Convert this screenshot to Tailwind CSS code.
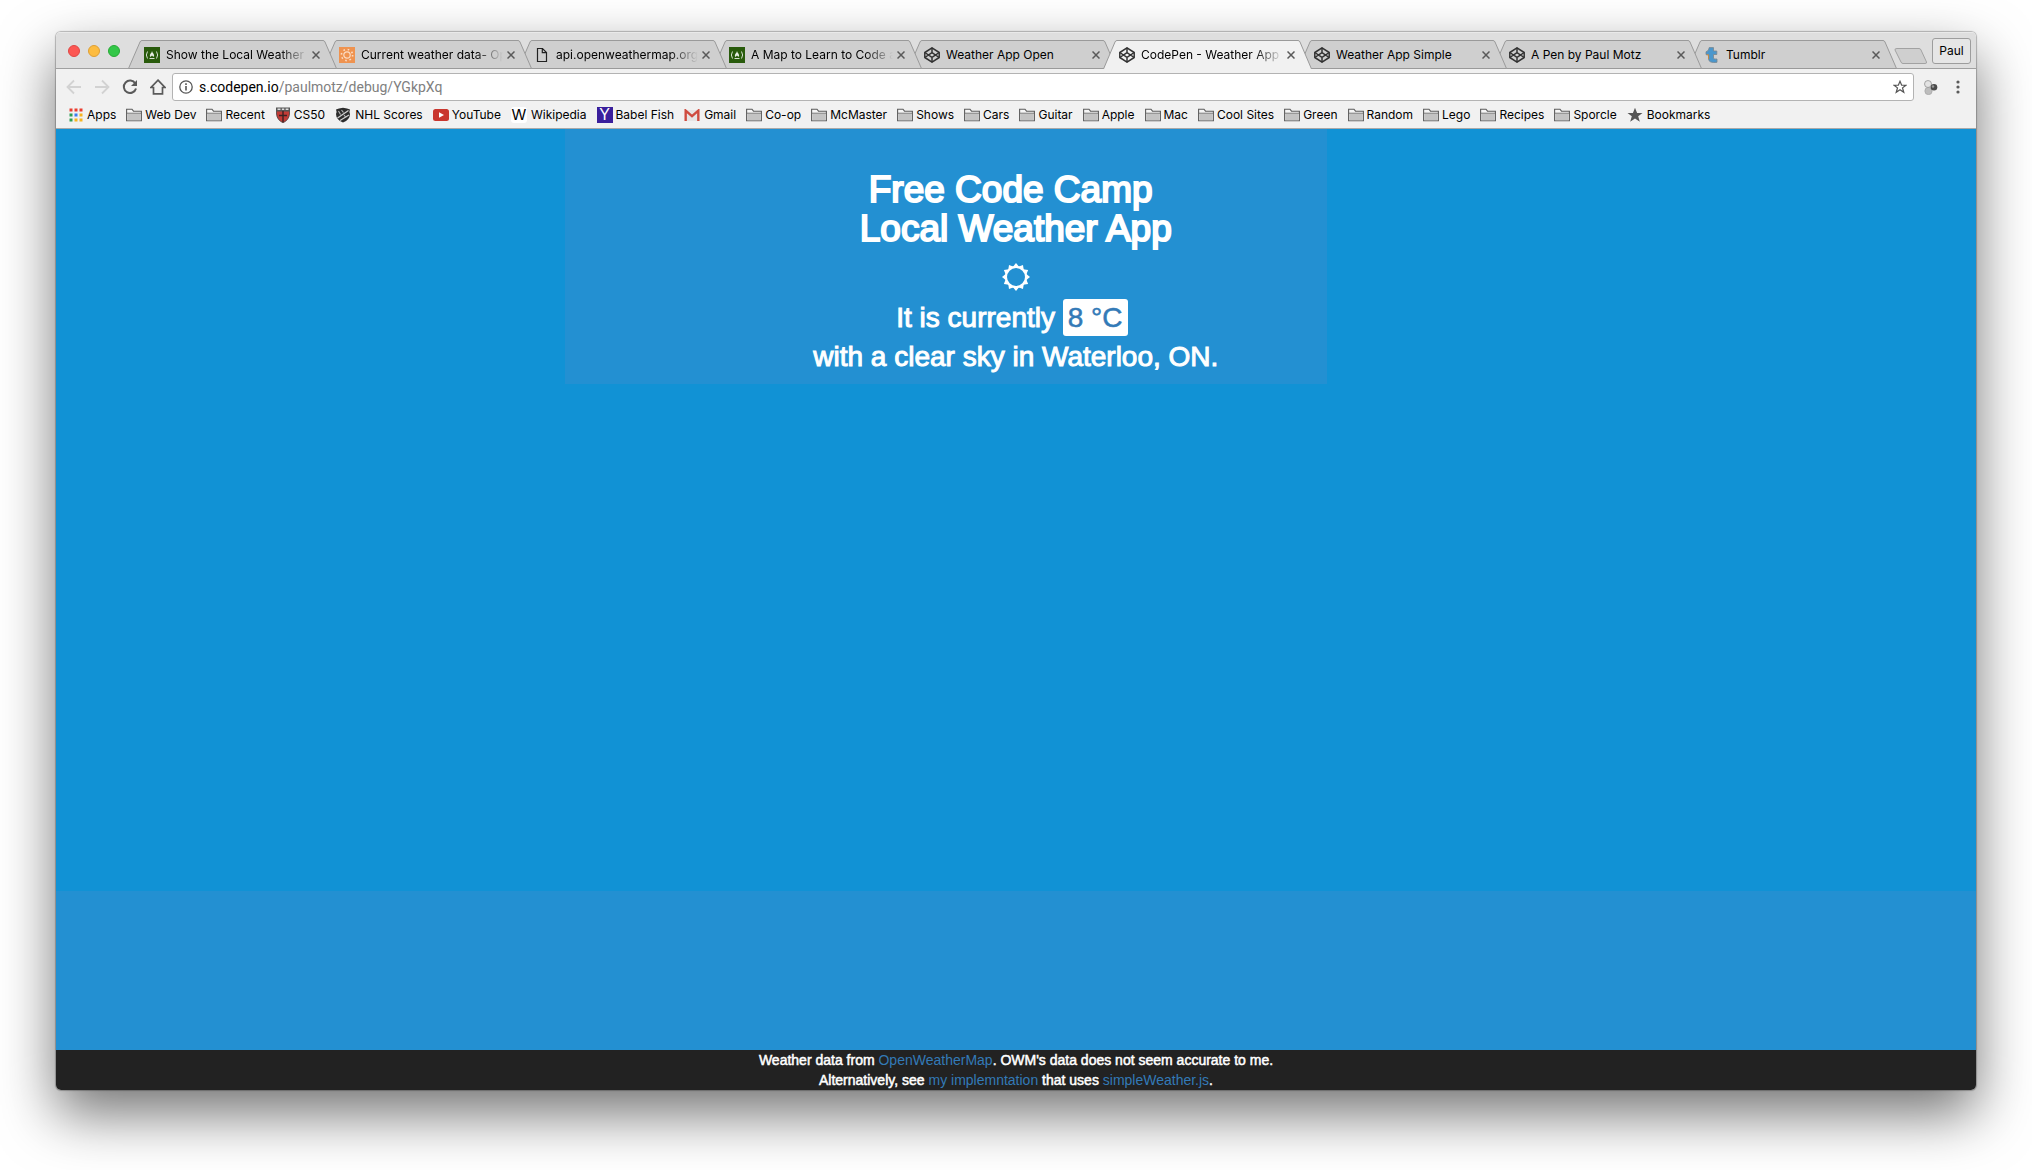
<!DOCTYPE html>
<html lang="en">
<head>
<meta charset="utf-8">
<title>CodePen - Weather App</title>
<script src="https://cdn.jsdelivr.net/npm/@tailwindcss/browser@4"></script>
</head>
<body class="min-h-screen bg-white flex flex-col px-14 pt-8 pb-20 font-['Inter',sans-serif] text-black">

<svg class="hidden" aria-hidden="true">
  <symbol id="codepen" viewBox="0 0 16 16"><g fill="none" stroke="#333" stroke-width="1.5" stroke-linejoin="round"><path d="M8 .8 15.200 5.500V10.500L8 15.200 .8 10.500V5.500Z"/><path d="M8 .8V5.600M8 10.400V15.200M.8 5.500 8 10.400 15.200 5.500M.8 10.500 8 5.600 15.200 10.500"/></g></symbol>
  <symbol id="fcc" viewBox="0 0 16 16"><path d="M0 0H16V16H0Z" fill="#295b0c"/><g fill="none" stroke="#d5dfd0" stroke-width="1"><path d="M3.500 4.500Q1.200 8 3.500 11.500M12.500 4.500Q14.800 8 12.500 11.500M5.500 11.500H10.500"/></g><path d="M8 4Q8.300 5.500 9.700 7 11 9 9 10.300 9.300 9 8 8.500 6.700 9 7 10.300 5 9 6.500 6.800 7.800 5.500 8 4Z" fill="#e6ece3"/></symbol>
  <symbol id="owm" viewBox="0 0 16 16"><path d="M0 0H16V16H0Z" fill="#ef9350"/><g fill="none" stroke="#fbdcc4"><circle cx="8" cy="8" r="3.200" stroke-width="1.200"/><circle cx="8" cy="8" r="5.600" stroke-width="1.600" stroke-dasharray="1.600 2.800"/></g></symbol>
  <symbol id="file" viewBox="0 0 16 16"><path d="M3.500 1.500H8.500L12.500 5.500V14.500H3.500ZM8.300 1.500V5.700H12.500" fill="none" stroke="#222" stroke-width="1.200"/></symbol>
  <symbol id="tumblr" viewBox="0 0 16 16"><path d="M5.200 .6H9.500V4H12.800V7.500H9.500V11Q9.500 12.600 13 12V15.300Q4.500 16.500 4.500 11.500V7.500H2V4.800Q5 4 5.200 .6Z" fill="#4b97cc" stroke="#77858f" stroke-width=".8"/><path d="M2.500 7.900H4.600V12" fill="none" stroke="#c98b42" stroke-width="1"/></symbol>
  <symbol id="folder" viewBox="0 0 16 14"><path d="M.6 12.800V1.200H6L7.500 3.200H15.400V12.800Z" fill="#f6f6f6" stroke="#5c5c5c" stroke-width="1.100"/><path d="M1.200 5.500H14.800V12.200H1.200Z" fill="#c3c3c3"/><path d="M1 5.200H15" stroke="#777"/></symbol>
  <symbol id="apps" viewBox="0 0 14 14"><path d="M.5 .5h3v3h-3zM5.500 .5h3v3h-3zM10.500 .5h3v3h-3z" fill="#ea3d2f"/><path d="M.5 5.500h3v3h-3z" fill="#2f9e55"/><path d="M5.500 5.500h3v3h-3z" fill="#3d7ef0"/><path d="M10.500 5.500h3v3h-3zM5.500 10.500h3v3h-3zM10.500 10.500h3v3h-3z" fill="#f7b51f"/><path d="M.5 10.500h3v3h-3z" fill="#2f9e55"/></symbol>
  <symbol id="shield" viewBox="0 0 16 16"><path d="M1.500 3.500H14.500V7Q14 13 8 15.800 2 13 1.500 7Z" fill="#c23b36" stroke="#4b4040" stroke-width=".8"/><path d="M1 .5H15V4.500H1Z" fill="#555"/><path d="M2.500 2.200H5.500M6.800 2.200H9.300M10.600 2.200H13.500" stroke="#ddd" stroke-width="1.600"/><path d="M8 4V15M4 8.500H12" stroke="#3a2222" stroke-width="1.400"/></symbol>
  <symbol id="nhl" viewBox="0 0 16 16"><path d="M1 2.500 4 1.500 8 .8 12 1.500 15 2.500Q14 4.500 15 7 15 12.500 8 15.600 1 12.500 1 7 2 4.500 1 2.500Z" fill="#2c2c2c"/><path d="M2.500 11 13.500 3.500M5 13.500 14 8" stroke="#cfcfcf" stroke-width="1.300"/><path d="M3.500 4 5.500 7.500M6.500 3 8.500 5.500M9 8 11 10.500" stroke="#bbb" stroke-width="1.100"/></symbol>
  <symbol id="youtube" viewBox="0 0 16 12"><rect width="16" height="12" rx="2.500" fill="#c9372f"/><path d="M6 3.300 11 6 6 8.700Z" fill="#fff"/></symbol>
  <symbol id="gmail" viewBox="0 0 14 11"><path d="M1 1H13V11H1Z" fill="#e6e4e4"/><path d="M1.200 11V1.500L7 6.500 12.800 1.500V11" fill="none" stroke="#cf4b3f" stroke-width="2.200"/></symbol>
  <symbol id="star" viewBox="0 0 16 16"><path d="M8 .8 10.100 6H15.500L11.200 9.300 12.800 14.800 8 11.600 3.200 14.800 4.800 9.300 .5 6H5.900Z" fill="#555"/></symbol>
  <symbol id="close" viewBox="0 0 8 8"><path d="M.5 .5 7.500 7.500M7.500 .5 .5 7.500" stroke="#5a5a5a" stroke-width="1.500"/></symbol>
  <symbol id="tab" viewBox="0 0 209 29" preserveAspectRatio="none"><path d="M.5 28.500 12 2Q12.600 .5 14 .5H195Q196.400 .5 197 2L208.500 28.500Z" fill="#cfcfcf" stroke="#9a9a9a"/></symbol>
  <symbol id="tab-active" viewBox="0 0 209 29" preserveAspectRatio="none"><path d="M.5 29 12 2Q12.600 .5 14 .5H195Q196.400 .5 197 2L208.500 29" fill="#f1f1f1" stroke="#9a9a9a"/></symbol>
</svg>

<main class="grow flex flex-col rounded-[5px] overflow-hidden shadow-[0_0_1px_1px_rgba(0,0,0,0.25),0_24px_56px_rgba(0,0,0,0.55)]">
  <header class="bg-[#f1f1f1] border-b border-[#a9a9a9]">

    <div class="flex h-9 bg-[#dedede] border-t border-[#e9e9e9] relative">
      <div class="flex gap-2 pl-3 pt-3 w-[72px] shrink-0">
        <button aria-label="Close window" class="size-3 rounded-full bg-[#fc5753] border border-[#df4744]"></button>
        <button aria-label="Minimize window" class="size-3 rounded-full bg-[#fdbc40] border border-[#de9f34]"></button>
        <button aria-label="Zoom window" class="size-3 rounded-full bg-[#33c748] border border-[#27aa35]"></button>
      </div>
      <nav aria-label="Tabs" id="tabs" class="flex grow pt-[7px] min-w-0 isolate"></nav>
      <div class="flex shrink-0 pr-[5px] gap-1 pl-2.5">
        <button aria-label="New tab" class="pt-[15px] self-start"><svg class="w-[34px] h-4" viewBox="0 0 34 16"><path d="M3 .5H25Q26.500 .5 27 2L32.500 14Q33 15.500 31 15.500H9Q7.500 15.500 7 14L1 2Q.5 .5 3 .5Z" fill="#cfcfcf" stroke="#a2a2a2"/></svg></button>
        <button class="mt-[5px] w-[39px] h-[26px] rounded-[3px] border border-[#9d9d9d] bg-[#e6e6e6] text-xs">Paul</button>
      </div>
    </div>

    <div class="flex items-center h-[37px] px-2.5 border-t border-[#a0a0a0]">
      <div class="flex items-center gap-3 w-[106px] shrink-0">
        <button aria-label="Back"><svg class="size-4" viewBox="0 0 16 16"><path d="M15 8H2M8 1.500 1.500 8 8 14.500" fill="none" stroke="#d2d2d2" stroke-width="1.800"/></svg></button>
        <button aria-label="Forward"><svg class="size-4" viewBox="0 0 16 16"><path d="M1 8H14M8 1.500 14.500 8 8 14.500" fill="none" stroke="#d2d2d2" stroke-width="1.800"/></svg></button>
        <button aria-label="Reload"><svg class="size-4" viewBox="0 0 16 16"><path d="M13.300 4.500A6.200 6.200 0 1 0 14 9.500" fill="none" stroke="#5a5a5a" stroke-width="2"/><path d="M15 1V7H9Z" fill="#5a5a5a"/></svg></button>
        <button aria-label="Home"><svg class="size-4" viewBox="0 0 16 16"><path d="M8 1.200 15 8.500H12.500V14.800H3.500V8.500H1Z" fill="none" stroke="#5a5a5a" stroke-width="1.700"/></svg></button>
      </div>
      <div class="flex items-center grow h-7 px-1.5 gap-1.5 bg-white border border-[#b3b3b3] rounded-[3px]">
        <svg class="size-[14px]" viewBox="0 0 14 14"><circle cx="7" cy="7" r="6.200" fill="none" stroke="#555" stroke-width="1.300"/><path d="M7 6V10.500M7 3.300V4.900" stroke="#555" stroke-width="1.600"/></svg>
        <a href="#" class="grow font-['Roboto',sans-serif] text-sm text-[#808080]"><span class="text-black">s.codepen.io</span>/paulmotz/debug/YGkpXq</a>
        <button aria-label="Bookmark this page"><svg class="size-[14px]" viewBox="0 0 16 16"><path d="M8 1.500 9.900 6H14.700L10.900 9 12.300 14 8 11.100 3.700 14 5.100 9 1.300 6H6.100Z" fill="none" stroke="#555" stroke-width="1.400"/></svg></button>
      </div>
      <button aria-label="Extension" class="ml-2.5"><svg class="w-[14px] h-[15px]" viewBox="0 0 14 15"><circle cx="4.500" cy="11" r="3.700" fill="#bdbdbd" stroke="#999" stroke-width=".5"/><circle cx="4" cy="4" r="3.500" fill="#e3e3e3" stroke="#888" stroke-width=".7"/><circle cx="10" cy="7.300" r="3.300" fill="#4a4a4a"/><circle cx="9" cy="6.500" r="1.200" fill="#999"/></svg></button>
      <button aria-label="Menu" class="ml-4 mr-1"><svg class="w-2 h-[14px]" viewBox="0 0 8 14"><g fill="#5a5a5a"><circle cx="4" cy="2" r="1.600"/><circle cx="4" cy="7" r="1.600"/><circle cx="4" cy="12" r="1.600"/></g></svg></button>
    </div>

    <nav aria-label="Bookmarks" id="bookmarks" class="flex items-center gap-2.5 h-[23px] pb-[3px] pl-3 text-xs whitespace-nowrap"></nav>
  </header>

  <div class="grow flex flex-col justify-between bg-[#1192d5] font-['Liberation_Sans',sans-serif] text-white text-center">
    <section class="w-[762px] ml-[26.5%] pl-[140px] pt-[41px] pb-2 bg-[#2390d2]">
      <h1 class="text-[37px] leading-[39px] [-webkit-text-stroke:2px_white]">Free Code Camp&nbsp;<br>Local Weather App</h1>
      <div class="flex justify-center pt-[15px] pb-[7px]">
        <svg class="size-7" viewBox="-14 -14 28 28" role="img" aria-label="Clear sky"><g id="rays" fill="#fff"></g><circle r="10" fill="none" stroke="#fff" stroke-width="2"/></svg>
      </div>
      <p class="text-[28px] leading-[39px] [-webkit-text-stroke:1px_white]">It is currently <button class="leading-[37px] px-[5px] rounded-[3px] bg-white text-[#337ab7] [-webkit-text-stroke:0.5px_#337ab7]">8 °C</button>&nbsp;<br>with a clear sky in Waterloo, ON.</p>
    </section>
    <div class="h-[159px] bg-[#2390d2]"></div>
  </div>
  <footer class="bg-[#222] text-white text-center text-sm leading-5 font-['Liberation_Sans',sans-serif] [-webkit-text-stroke:0.5px_white]">
    <p>Weather data from <a href="#" class="text-[#337ab7] [-webkit-text-stroke:0px]">OpenWeatherMap</a>. OWM's data does not seem accurate to me.</p>
    <p>Alternatively, see <a href="#" class="text-[#337ab7] [-webkit-text-stroke:0px]">my implemntation</a> that uses <a href="#" class="text-[#337ab7] [-webkit-text-stroke:0px]">simpleWeather.js</a>.</p>
  </footer>
</main>
<script>
const tabs = [
  ['fcc', 'Show the Local Weather', true], ['owm', 'Current weather data- Op', true],
  ['file', 'api.openweathermap.org', true], ['fcc', 'A Map to Learn to Code a', true],
  ['codepen', 'Weather App Open'], ['codepen', 'CodePen - Weather App', true, true],
  ['codepen', 'Weather App Simple'], ['codepen', 'A Pen by Paul Motz'], ['tumblr', 'Tumblr']
];
document.getElementById('tabs').innerHTML = tabs.map(([icon, title, long, active], i) => `
  <div class="relative flex items-center h-[29px] grow basis-0 max-w-[195px] min-w-0 pl-4 pr-[3px]" style="z-index:${active ? 20 : 10 - i}">
    <svg class="absolute left-0 top-0 h-[29px] w-[calc(100%+14px)] -z-10"><use href="#${active ? 'tab-active' : 'tab'}"/></svg>
    <svg class="size-4 shrink-0"><use href="#${icon}"/></svg>
    <a href="#" class="ml-1.5 mr-1 grow min-w-0 overflow-hidden whitespace-nowrap text-xs ${long ? '[mask-image:linear-gradient(to_right,black_80%,transparent)]' : ''}">${title}</a>
    <button aria-label="Close tab" class="shrink-0"><svg class="size-2"><use href="#close"/></svg></button>
  </div>`).join('');

const icon = (id, cls) => `<svg class="${cls}"><use href="#${id}"/></svg>`;
const folder = icon('folder', 'w-4 h-[14px]');
const marks = [
  [icon('apps', 'w-4 h-[14px]'), 'Apps'], [folder, 'Web Dev'], [folder, 'Recent'],
  [icon('shield', 'size-4'), 'CS50'], [icon('nhl', 'size-4'), 'NHL Scores', true],
  [icon('youtube', 'w-4 h-3'), 'YouTube'],
  ['<span class="size-4 rounded-[3px] bg-white flex items-center justify-center font-[\'Liberation_Serif\',serif] text-[15px]">W</span>', 'Wikipedia', true],
  ['<span class="size-4 bg-[#3a1f9c] text-white flex items-center justify-center font-[\'Liberation_Sans\',sans-serif] text-base">Y</span>', 'Babel Fish'],
  [icon('gmail', 'w-4 h-3'), 'Gmail', true],
  ...['Co-op', 'McMaster', 'Shows', 'Cars', 'Guitar', 'Apple', 'Mac', 'Cool Sites', 'Green', 'Random', 'Lego', 'Recipes', 'Sporcle'].map(t => [folder, t]),
  [icon('star', 'size-4'), 'Bookmarks', true]
];
document.getElementById('bookmarks').innerHTML = marks.map(([i, t, wide]) =>
  `<a href="#" class="flex items-center ${wide ? 'gap-1' : 'gap-[3px]'}">${i}<span>${t}</span></a>`).join('');

document.getElementById('rays').innerHTML = Array.from({length: 12}, (_, i) =>
  `<path d="M-3.200 -10 0 -14 3.200 -10Z" transform="rotate(${i * 30})"/>`).join('');
</script>
</body>
</html>
